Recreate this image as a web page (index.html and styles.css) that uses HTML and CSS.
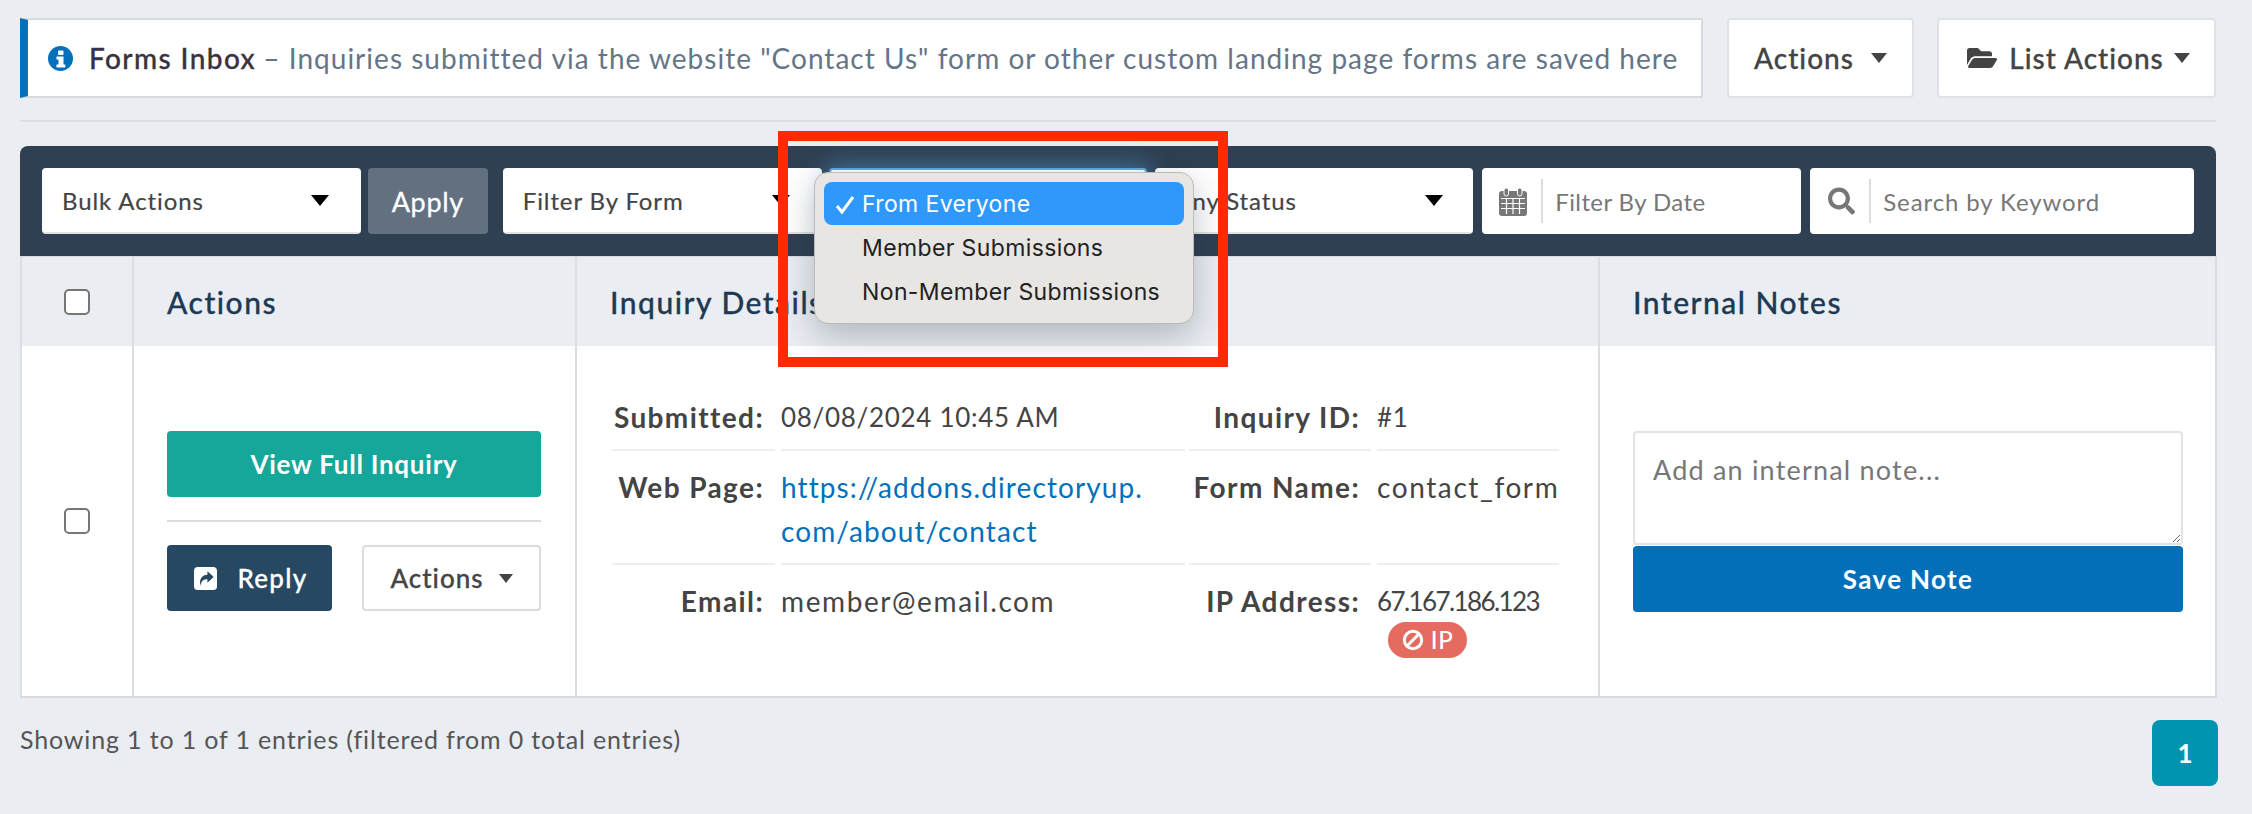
FILE: index.html
```html
<!DOCTYPE html>
<html lang="en">
<head>
<meta charset="UTF-8">
<title>Forms Inbox</title>
<link rel="stylesheet" href="styles.css">
</head>
<body>
<div class="page">
    <div class="topbar">
        <div class="notice">
            <svg class="info" viewBox="0 0 25 25"><circle cx="12.5" cy="12.5" r="12.5" fill="#0270bb"/><rect x="10" y="4.5" width="5.5" height="4.5" rx="1" fill="#fff"/><path d="M8.5 10.5h7v8h1.8v3H8.5v-3h2v-5h-2z" fill="#fff"/></svg>
            <p><b>Forms Inbox</b> <span>– Inquiries submitted via the website "Contact Us" form or other custom landing page forms are saved here</span></p>
        </div>
        <div class="topbtn topbtn-actions">Actions <i class="caret"></i></div>
        <div class="topbtn topbtn-list">
            <svg class="folder" viewBox="0 0 576 512"><path d="M572.694 292.093L500.27 416.248A63.997 63.997 0 0 1 444.989 448H45.025c-18.523 0-30.064-20.093-20.731-36.093l72.424-124.155A64 64 0 0 1 152 256h399.964c18.523 0 30.064 20.093 20.73 36.093zM152 224h328v-48c0-26.51-21.49-48-48-48H272l-64-64H48C21.49 64 0 85.49 0 112v278.046l69.077-118.418C86.214 242.25 117.989 224 152 224z"/></svg>
            List Actions <i class="caret"></i>
        </div>
    </div>
    <div class="rule"></div>

    <div class="toolbar">
        <div class="select bulk"><span>Bulk Actions</span><i class="caret black"></i></div>
        <div class="apply">Apply</div>
        <div class="select byform"><span>Filter By Form</span><i class="caret black"></i></div>
        <div class="select focused"></div>
        <div class="select status"><span>Any Status</span><i class="caret black"></i></div>
        <div class="field date">
            <svg class="cal" viewBox="0 0 28 29"><rect y="4" width="28" height="25" rx="3" fill="#777"/><g stroke="#fff" stroke-width="1.2"><path d="M2 11.5h24M2 16.5h24M2 21.5h24M7.5 11v16M14 11v16M20.5 11v16"/></g><rect x="5" y="1" width="4.5" height="8" rx="2.2" fill="#777" stroke="#fff"/><rect x="18.5" y="1" width="4.5" height="8" rx="2.2" fill="#777" stroke="#fff"/></svg>
            <input type="text" placeholder="Filter By Date">
        </div>
        <div class="field search">
            <svg class="mag" viewBox="0 0 512 512"><path d="M505 442.7L405.3 343c-4.5-4.5-10.6-7-17-7H372c27.6-35.3 44-79.7 44-128C416 93.1 322.9 0 208 0S0 93.1 0 208s93.1 208 208 208c48.3 0 92.7-16.4 128-44v16.3c0 6.4 2.5 12.5 7 17l99.7 99.7c9.4 9.4 24.6 9.4 33.9 0l28.3-28.3c9.4-9.4 9.4-24.6.1-34zM208 336c-70.7 0-128-57.2-128-128 0-70.7 57.2-128 128-128 70.7 0 128 57.2 128 128 0 70.7-57.2 128-128 128z"/></svg>
            <input type="text" placeholder="Search by Keyword">
        </div>
    </div>

    <div class="grid">
        <div class="th th-check"><input class="check" type="checkbox"></div>
        <div class="th">Actions</div>
        <div class="th">Inquiry Details</div>
        <div class="th">Internal Notes</div>

        <div class="td td-check"><input class="check" type="checkbox"></div>
        <div class="td td-actions">
            <div class="btn view">View Full Inquiry</div>
            <div class="divider"></div>
            <div class="btnrow">
                <div class="btn reply">
                    <svg class="share" viewBox="0 0 24 24"><rect width="24" height="24" rx="4" fill="#fff"/><path d="M14 4.500l6.500 6-6.500 6v-3.700c-4 0-6.200 1.500-7.400 6.700C5.200 12.500 8.600 8.300 14 8.200z" fill="#264863"/></svg>
                    Reply
                </div>
                <div class="btn small">Actions <i class="caret"></i></div>
            </div>
        </div>
        <div class="td td-details">
            <div class="lab">Submitted:</div>
            <div class="val num">08/08/2024 10:45 AM</div>
            <div class="lab">Inquiry ID:</div>
            <div class="val num">#1</div>

            <div class="lab">Web Page:</div>
            <div class="val"><a href="#">https://addons.directoryup.<br>com/about/contact</a></div>
            <div class="lab">Form Name:</div>
            <div class="val">contact_form</div>

            <div class="lab last">Email:</div>
            <div class="val last">member@email.com</div>
            <div class="lab last">IP Address:</div>
            <div class="val num ip last">
                67.167.186.123
                <div class="badge">
                    <svg class="ban" viewBox="0 0 22 22"><circle cx="11" cy="11" r="8.700" fill="none" stroke="#fff" stroke-width="3"/><path d="M5 17L17 5" stroke="#fff" stroke-width="3"/></svg>
                    IP
                </div>
            </div>
        </div>
        <div class="td td-notes">
            <textarea placeholder="Add an internal note..."></textarea>
            <div class="btn save">Save Note</div>
        </div>
    </div>

    <div class="foot">
        <div class="showing">Showing 1 to 1 of 1 entries (filtered from 0 total entries)</div>
        <div class="pageno">1</div>
    </div>
</div>

<!-- native select menu + the red callout, both over the page -->
<div class="menu">
    <div class="opt on">
        <svg class="tick" viewBox="0 0 20 20"><path d="M2 11l5 6L18 2" fill="none" stroke="#fff" stroke-width="3"/></svg>
        From Everyone
    </div>
    <div class="opt">Member Submissions</div>
    <div class="opt">Non-Member Submissions</div>
</div>
<div class="callout"></div>
</body>
</html>
```

FILE: styles.css
```css
*{
    margin:0;
    padding:0;
    box-sizing:border-box;
}
body{
    background:#eaedf2;
    font-family:"Lato","Noto Sans",sans-serif;
    color:#444;
    position:relative;
    height:814px;
    overflow:hidden;
}
.page{
    padding:18px 35px 0 20px;
}
/* top row */
.topbar{
    display:flex;
    gap:24px;
    height:80px;
}
.notice{
    width:1683px;
    background:#fff;
    border:2px solid #d8dadd;
    border-left:8px solid #0270bb;
    display:flex;
    align-items:center;
    padding-left:20px;
    gap:16px;
    font-size:28px;
    white-space:nowrap;
}
.notice b{
    font-weight:500;
    color:#3a3240;
    letter-spacing:1.4px;
    -webkit-text-stroke:.3px #3a3240;
}
.notice span{
    color:#647587;
    font-weight:400;
    letter-spacing:1.02px;
}
.info{
    width:25px;
    height:25px;
    flex:none;
}
.topbtn{
    background:#fff;
    border:2px solid #dfe1e4;
    border-radius:4px;
    display:flex;
    align-items:center;
    justify-content:center;
    font-size:28px;
    font-weight:500;
    color:#444;
    letter-spacing:1px;
    -webkit-text-stroke:.3px #444;
}
.topbtn-actions{
    width:187px;
    gap:17px;
}
.topbtn-list{
    width:279px;
    margin-left:-1px;
    padding-left:4px;
    gap:10px;
}
.folder{
    width:30px;
    height:28px;
    fill:#444;
    margin-right:2px;
}
.caret{
    display:inline-block;
    width:0;
    height:0;
    border-left:8px solid transparent;
    border-right:8px solid transparent;
    border-top:10px solid #444;
}
.caret.black{
    border-left-width:9px;
    border-right-width:9px;
    border-top:11px solid #000;
}
.rule{
    height:2px;
    background:#dcdee1;
    margin:22px 1px 24px 0;
}
/* dark filter bar */
.toolbar{
    height:110px;
    margin-right:1px;
    background:#2f4052;
    border-radius:8px 8px 0 0;
    padding:22px;
    display:flex;
    gap:7px;
}
.select,.field,.apply{
    height:66px;
    border-radius:4px;
}
.select{
    background:#fff;
    border-bottom:2px solid #e3e3e3;
    width:319px;
    display:flex;
    align-items:center;
    justify-content:space-between;
    padding:0 32px 0 20px;
    font-size:24px;
    letter-spacing:.9px;
    color:#444;
    -webkit-text-stroke:.2px #444;
}
.apply{
    width:120px;
    background:#627080;
    color:#fff;
    font-size:27px;
    letter-spacing:.7px;
    -webkit-text-stroke:.3px #fff;
    display:flex;
    align-items:center;
    justify-content:center;
}
.byform{
    margin-left:8px;
}
.focused{
    box-shadow:0 0 22px 4px rgba(90,170,235,.45);
    border:2px solid #6aa9da;
}
.status{
    width:318px;
    margin-left:1px;
    padding-right:30px;
}
.field{
    background:#fff;
    display:flex;
    align-items:center;
    margin-left:2px;
}
.date{
    width:319px;
}
.search{
    width:384px;
}
.cal{
    width:28px;
    height:29px;
    margin-left:17px;
    flex:none;
}
.mag{
    width:27px;
    height:28px;
    fill:#777;
    margin-left:18px;
    flex:none;
}
.field input{
    flex:1;
    min-width:0;
    height:44px;
    border:0;
    border-left:2px solid #ddd;
    outline:0;
    font:400 24px "Lato","Noto Sans",sans-serif;
    letter-spacing:.4px;
    padding-left:12px;
    margin-left:14px;
    background:none;
}
.search input{
    letter-spacing:.9px;
}
.field input::placeholder,
textarea::placeholder{
    color:#777;
    opacity:1;
}
/* table */
.grid{
    display:grid;
    grid-template-columns:112px 443px 1023px 617px;
    grid-template-rows:89px 350px;
    border:solid #d9dbde;
    border-width:1px 2px 2px 0;
}
.th,.td{
    border-left:2px solid #dcdee1;
}
.th{
    background:#eaedf2;
    display:flex;
    align-items:center;
    padding-left:33px;
    font-size:30px;
    font-weight:500;
    letter-spacing:1.5px;
    color:#1d3a55;
    -webkit-text-stroke:.3px #1d3a55;
}
.th-check,.td-check{
    padding:0;
    display:flex;
    align-items:center;
    justify-content:center;
}
.td{
    background:#fff;
}
.check{
    appearance:none;
    width:26px;
    height:26px;
    background:#fff;
    border:2px solid #767676;
    border-radius:5px;
}
.td-actions{
    padding:0 34px 0 33px;
    display:flex;
    flex-direction:column;
    justify-content:center;
}
.btn{
    height:66px;
    border-radius:4px;
    display:flex;
    align-items:center;
    justify-content:center;
    font-size:26px;
    font-weight:700;
    color:#fff;
    letter-spacing:.75px;
}
.view{
    background:#14a79a;
}
.divider{
    height:2px;
    background:#dcdcdc;
    margin:23px 0;
}
.btnrow{
    display:flex;
    justify-content:space-between;
}
.reply{
    width:165px;
    background:#264863;
    font-weight:500;
    letter-spacing:1.300px;
    -webkit-text-stroke:.3px #fff;
    padding-left:3px;
    gap:20px;
}
.share{
    width:23px;
    height:23px;
}
.small{
    width:179px;
    background:#fff;
    border:2px solid #dcdcdc;
    color:#444;
    font-weight:500;
    letter-spacing:1px;
    -webkit-text-stroke:.3px #444;
    gap:15px;
}
.small .caret{
    border-left-width:7px;
    border-right-width:7px;
    border-top-width:9px;
}
.td-details{
    padding:35px 0 0 35px;
    display:grid;
    grid-template-columns:163px 406px 182px 184px;
    column-gap:4px;
    grid-template-rows:auto auto 1fr;
    font-size:28px;
    line-height:44px;
    letter-spacing:1.400px;
}
.lab,.val{
    padding:14px 0 10px;
    border-bottom:2px solid #eee;
    white-space:nowrap;
}
.lab{
    font-weight:700;
    text-align:right;
    padding-right:11px;
    color:#444;
    letter-spacing:1.400px;
}
.val{
    color:#444;
    margin-left:2px;
    letter-spacing:1.600px;
}
.val.num{
    font-size:26px;
    letter-spacing:.7px;
}
.val.ip{
    letter-spacing:-1.600px;
}
.lab.last,.val.last{
    border-bottom:0;
}
.val a{
    color:#0270bb;
    text-decoration:none;
    letter-spacing:1.100px;
}
.badge{
    width:79px;
    height:36px;
    margin:-1px 0 0 11px;
    border-radius:18px;
    background:#e56b60;
    color:#fff;
    font-size:24px;
    font-weight:500;
    letter-spacing:.5px;
    line-height:36px;
    display:flex;
    align-items:center;
    justify-content:center;
    gap:7px;
}
.ban{
    width:22px;
    height:22px;
}
.td-notes{
    padding:0 32px 0 33px;
    display:flex;
    flex-direction:column;
    justify-content:center;
}
textarea{
    display:block;
    height:114px;
    margin-bottom:1px;
    border:2px solid #e3e3e3;
    border-radius:4px;
    padding:20px 18px;
    outline:0;
    font:400 27px "Lato","Noto Sans",sans-serif;
    letter-spacing:1.200px;
}
.save{
    background:#026fb9;
    letter-spacing:1.350px;
}
/* footer */
.foot{
    display:flex;
    justify-content:space-between;
    align-items:flex-start;
    margin-top:22px;
}
.showing{
    font-size:25px;
    line-height:38px;
    color:#555;
    letter-spacing:.85px;
}
.pageno{
    width:66px;
    height:66px;
    margin-right:-1px;
    border-radius:8px;
    background:#0194af;
    color:#fff;
    font-size:26px;
    font-weight:700;
    display:flex;
    align-items:center;
    justify-content:center;
}
/* overlays */
.menu{
    position:absolute;
    left:814px;
    top:172px;
    width:380px;
    height:152px;
    padding:9px;
    background:#e8e6e3;
    border:1px solid #bdbbb8;
    border-radius:14px;
    box-shadow:0 12px 34px rgba(30,40,60,.28);
    font-family:"Inter","Noto Sans",sans-serif;
    font-size:23px;
    letter-spacing:.38px;
    color:#222;
    display:flex;
    flex-direction:column;
    gap:1px;
}
.opt{
    height:44px;
    padding-left:38px;
    border-radius:8px;
    display:flex;
    align-items:center;
    position:relative;
}
.opt.on{
    background:#2f98fb;
    color:#fff;
}
.tick{
    position:absolute;
    left:11px;
    top:13px;
    width:20px;
    height:20px;
}
.callout{
    position:absolute;
    left:778px;
    top:131px;
    width:450px;
    height:236px;
    border:10px solid #ff2a00;
}
```
